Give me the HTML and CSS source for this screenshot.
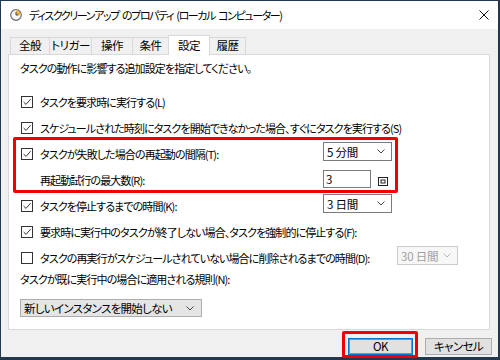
FILE: index.html
```html
<!DOCTYPE html>
<html lang="ja">
<head>
<meta charset="utf-8">
<title>ディスククリーンアップ のプロパティ</title>
<link rel="stylesheet" href="styles.css">
</head>
<body>
<div class="window">
  <div class="titlebar">
    <svg class="ticon" viewBox="0 0 12 12" width="12" height="12">
      <circle cx="6" cy="6" r="5.3" fill="#f4f4f4" stroke="#6f6f6f" stroke-width="1.2"/>
      <path d="M6 6 L6 1.4 A4.6 4.6 0 0 1 10.6 6 Z" fill="#f3b23c"/>
      <path d="M6 3 L6 6 L8.5 6" fill="none" stroke="#444" stroke-width="1"/>
    </svg>
    <span class="title">ディスククリーンアップ のプロパティ (ローカル コンピューター)</span>
    <svg class="close" viewBox="0 0 10 10" width="10" height="10">
      <path d="M0.5 0.5 L9.5 9.5 M9.5 0.5 L0.5 9.5" stroke="#111" stroke-width="1"/>
    </svg>
  </div>
  <div class="body">
    <div class="tabs">
      <div class="tab">全般</div>
      <div class="tab">トリガー</div>
      <div class="tab">操作</div>
      <div class="tab">条件</div>
      <div class="tab active">設定</div>
      <div class="tab">履歴</div>
    </div>
    <div class="panel">
      <div class="intro">タスクの動作に影響する追加設定を指定してください。</div>
      <div class="row first">
        <span class="cb"><svg viewBox="0 0 12 12" width="12" height="12"><rect x="0.5" y="0.5" width="11" height="11" fill="#fff" stroke="#333"/><path d="M2.6 6 L5 8.4 L9.6 3.2" fill="none" stroke="#333" stroke-width="1"/></svg></span>
        <span class="label">タスクを要求時に実行する(L)</span>
      </div>
      <div class="row">
        <span class="cb"><svg viewBox="0 0 12 12" width="12" height="12"><rect x="0.5" y="0.5" width="11" height="11" fill="#fff" stroke="#333"/><path d="M2.6 6 L5 8.4 L9.6 3.2" fill="none" stroke="#333" stroke-width="1"/></svg></span>
        <span class="label wide">スケジュールされた時刻にタスクを開始できなかった場合、すぐにタスクを実行する(S)</span>
      </div>
      <div class="row">
        <span class="cb"><svg viewBox="0 0 12 12" width="12" height="12"><rect x="0.5" y="0.5" width="11" height="11" fill="#fff" stroke="#333"/><path d="M2.6 6 L5 8.4 L9.6 3.2" fill="none" stroke="#333" stroke-width="1"/></svg></span>
        <span class="label">タスクが失敗した場合の再起動の間隔(T):</span>
        <span class="combo up"><span>5&nbsp;分間</span><svg class="chev" viewBox="0 0 8 5" width="8" height="5"><path d="M0.5 0.5 L4 4 L7.5 0.5" fill="none" stroke="#444" stroke-width="1"/></svg></span>
      </div>
      <div class="row">
        <span class="cb"></span>
        <span class="label">再起動試行の最大数(R):</span>
        <span class="ctrl">
          <span class="input">3</span>
          <svg class="spin" viewBox="0 0 10 9" width="10" height="9"><rect x="0.5" y="0.5" width="9" height="8" fill="#fff" stroke="#222"/><rect x="3" y="3" width="4" height="3" fill="none" stroke="#222"/></svg>
        </span>
      </div>
      <div class="row">
        <span class="cb"><svg viewBox="0 0 12 12" width="12" height="12"><rect x="0.5" y="0.5" width="11" height="11" fill="#fff" stroke="#333"/><path d="M2.6 6 L5 8.4 L9.6 3.2" fill="none" stroke="#333" stroke-width="1"/></svg></span>
        <span class="label">タスクを停止するまでの時間(K):</span>
        <span class="combo up"><span>3&nbsp;日間</span><svg class="chev" viewBox="0 0 8 5" width="8" height="5"><path d="M0.5 0.5 L4 4 L7.5 0.5" fill="none" stroke="#444" stroke-width="1"/></svg></span>
      </div>
      <div class="row">
        <span class="cb"><svg viewBox="0 0 12 12" width="12" height="12"><rect x="0.5" y="0.5" width="11" height="11" fill="#fff" stroke="#333"/><path d="M2.6 6 L5 8.4 L9.6 3.2" fill="none" stroke="#333" stroke-width="1"/></svg></span>
        <span class="label wide">要求時に実行中のタスクが終了しない場合、タスクを強制的に停止する(F):</span>
      </div>
      <div class="row far">
        <span class="cb"><svg viewBox="0 0 12 12" width="12" height="12"><rect x="0.5" y="0.5" width="11" height="11" fill="#fff" stroke="#333"/></svg></span>
        <span class="label">タスクの再実行がスケジュールされていない場合に削除されるまでの時間(D):</span>
        <span class="combo disabled up"><span>30&nbsp;日間</span><svg class="chev" viewBox="0 0 8 5" width="8" height="5"><path d="M0.5 0.5 L4 4 L7.5 0.5" fill="none" stroke="#b8b8b8" stroke-width="1"/></svg></span>
      </div>
      <div class="rule">タスクが既に実行中の場合に適用される規則(N):</div>
      <div class="select"><span>新しいインスタンスを開始しない</span><svg class="chev" viewBox="0 0 8 5" width="8" height="5"><path d="M0.5 0.5 L4 4 L7.5 0.5" fill="none" stroke="#444" stroke-width="1"/></svg></div>
    </div>
    <div class="buttons">
      <button class="btn ok">OK</button>
      <button class="btn">キャンセル</button>
    </div>
  </div>
  <div class="mark mark-restart"></div>
  <div class="mark mark-ok"></div>
</div>
</body>
</html>
```

FILE: styles.css
```css
* { box-sizing: border-box; }
html, body { margin: 0; padding: 0; }
body {
  width: 500px;
  height: 360px;
  overflow: hidden;
  font-family: "Noto Sans CJK JP", "Noto Sans", sans-serif;
  font-size: 11px;
  font-feature-settings: "palt";
  color: #000;
}
.window {
  position: relative;
  width: 500px;
  height: 360px;
  border: 1px solid #22384f;
  border-bottom-width: 3px;
  border-right-width: 2px;
  background: #f0f0f0;
  display: flex;
  flex-direction: column;
}
.titlebar {
  height: 28px;
  background: #fff;
  display: flex;
  align-items: center;
  padding-left: 9px;
  padding-right: 9px;
}
.ticon { flex: none; }
.title {
  margin-left: 7px;
  flex: 1;
  white-space: pre;
  font-size: 11px;
  letter-spacing: -1.4px;
  word-spacing: 2px;
}
.close { flex: none; }
.body {
  flex: 1;
  padding: 6px 8px 0 7px;
  display: flex;
  flex-direction: column;
}
.tabs {
  display: flex;
  align-items: flex-end;
  padding-left: 2px;
  height: 19px;
}
.tab {
  height: 17px;
  border: 1px solid #d9d9d9;
  border-bottom: none;
  margin-right: -1px;
  display: flex;
  align-items: center;
  justify-content: center;
  padding: 0;
  white-space: nowrap;
  line-height: 1;
  font-size: 11.5px;
  letter-spacing: -0.5px;
  background: #f0f0f0;
}
.tab:nth-child(1) { width: 40px; }
.tab:nth-child(2) { width: 43px; }
.tab:nth-child(3) { width: 42px; }
.tab:nth-child(4) { width: 37px; }
.tab:nth-child(5) { width: 42px; }
.tab:nth-child(6) { width: 37px; }
.tab.active {
  height: 20px;
  background: #fff;
  position: relative;
  z-index: 1;
  margin-bottom: -1px;
}
.panel {
  height: 276px;
  width: 482px;
  background: #fff;
  border: 1px solid #d9d9d9;
  padding: 0 0 0 11px;
}
.intro {
  height: 26px;
  display: flex;
  align-items: center;
  letter-spacing: -0.9px;
}
.row {
  display: grid;
  grid-template-columns: 20px 283px auto;
  align-items: center;
  height: 26px;
}
.row.first { margin-top: 8px; }
.row.far { grid-template-columns: 20px 357px auto; }
.cb { display: flex; padding-left: 1px; }
.label { white-space: nowrap; letter-spacing: -0.9px; }
.label.wide { grid-column: 2 / 4; }
.combo {
  width: 69px;
  height: 19px;
  border: 1px solid #7a7a7a;
  background: #fff;
  display: flex;
  align-items: center;
  justify-content: space-between;
  padding: 0 6px 0 3px;
  white-space: nowrap;
  font-size: 11.5px;
  letter-spacing: -0.2px;
}
.combo.up { margin-top: -5px; }
.combo.disabled {
  width: 61px;
  border-color: #cccccc;
  color: #a0a0a0;
  background: #f7f7f7;
}
.ctrl { display: flex; align-items: center; }
.input {
  width: 48px;
  height: 18px;
  border: 1px solid #7a7a7a;
  padding-left: 2px;
  display: flex;
  align-items: center;
  margin-top: -2px;
  font-size: 11.5px;
}
.spin { margin-left: 7px; margin-top: 3px; }
.rule {
  height: 16px;
  display: flex;
  align-items: center;
  letter-spacing: -0.9px;
}
.select {
  margin-top: 12px;
  width: 182px;
  height: 18px;
  border: 1px solid #adadad;
  background: #e5e5e5;
  display: flex;
  align-items: center;
  justify-content: space-between;
  padding: 0 7px 0 3px;
  letter-spacing: -0.7px;
  font-size: 11.5px;
}
.buttons {
  display: flex;
  justify-content: flex-end;
  gap: 12px;
  margin-top: 8px;
  margin-right: -2px;
}
.btn {
  font-family: inherit;
  font-size: 11.5px;
  font-feature-settings: "palt";
  letter-spacing: -0.6px;
  height: 17px;
  padding: 0;
  border: 1px solid #adadad;
  background: #e1e1e1;
  color: #000;
  display: flex;
  align-items: center;
  justify-content: center;
  width: 67px;
  line-height: 1;
}
.btn.ok {
  width: 65px;
  border-color: #0078d7;
  box-shadow: inset 0 0 0 1px #4c9ee4;
}
.mark {
  position: absolute;
  border: 3px solid #f00000;
  border-radius: 2px;
}
.mark-restart { left: 12px; top: 136px; width: 385px; height: 56px; }
.mark-ok { left: 341px; top: 330px; width: 76px; height: 27px; }
```
